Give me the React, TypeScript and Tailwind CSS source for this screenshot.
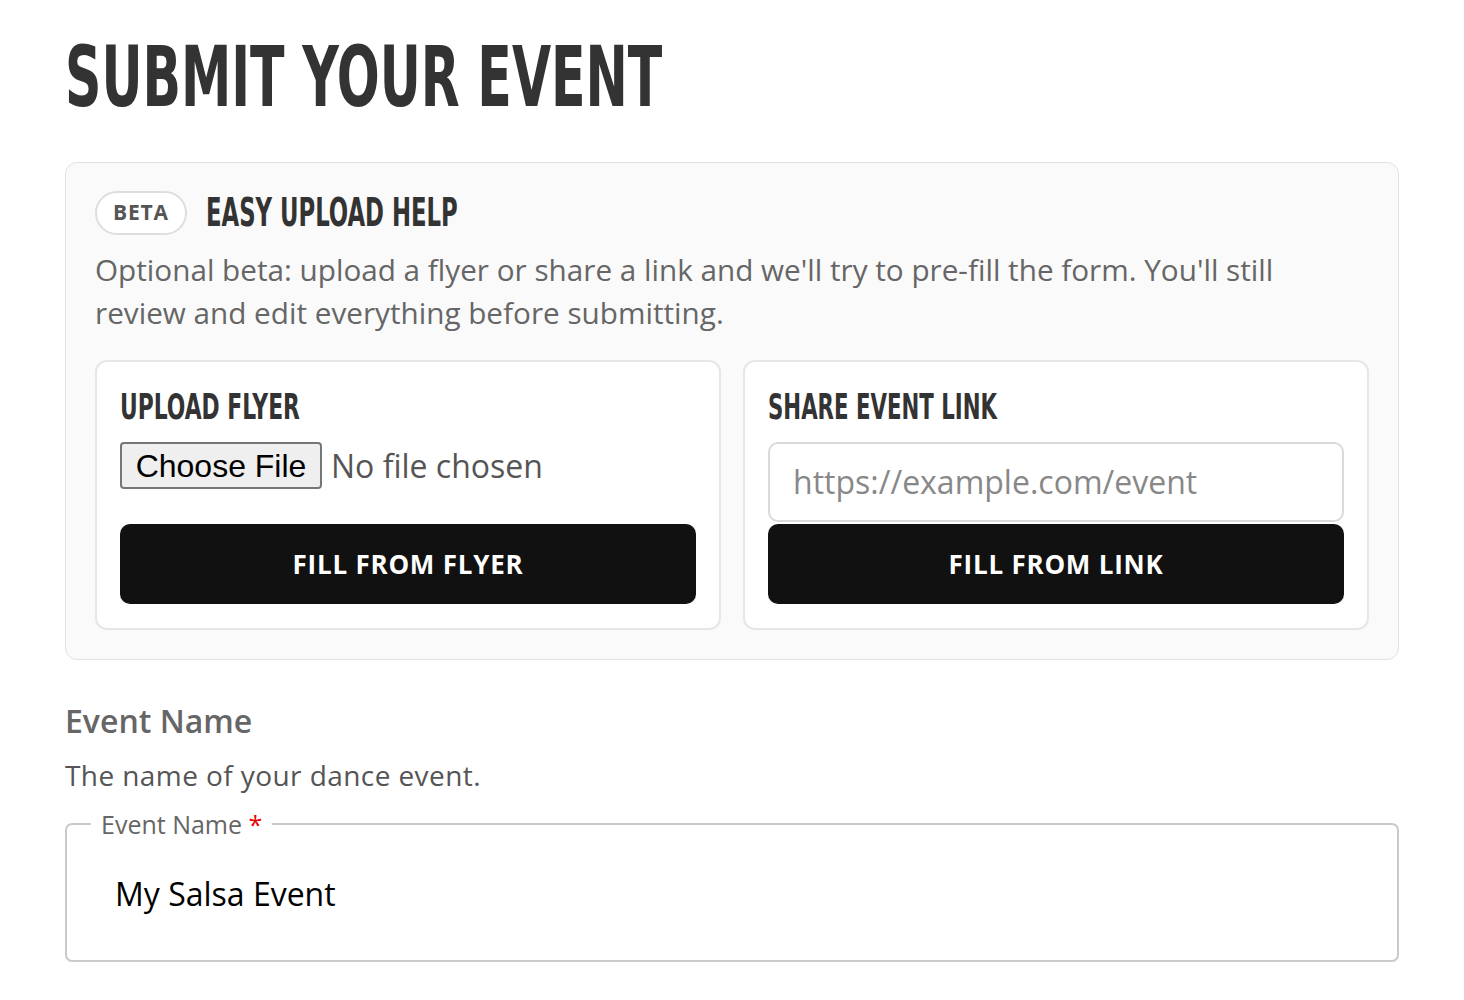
import React from "react";

export default function App() {
  return (
    <div className="min-h-screen bg-white text-[#333] font-['Open_Sans',sans-serif]">
      <div className="pl-[65px] pr-[65px] pt-[35px]">
        <h1 className="text-[84px] leading-[84px] font-bold text-[#333] origin-left scale-x-[0.669] whitespace-nowrap font-['Liberation_Sans_Narrow','DejaVu_Sans_Condensed',sans-serif]">
          SUBMIT YOUR EVENT
        </h1>

        <div className="mt-[43px] rounded-[12px] border border-[#e2e2e2] bg-[#fafafa] px-[29px] pt-[28px] pb-[29px]">
          <div className="flex items-center h-[44px]">
            <span className="flex h-[44px] w-[92px] items-center justify-center rounded-full border-2 border-[#dedede] bg-white text-[21px] font-bold tracking-[0.04em] text-[#555]">
              BETA
            </span>
            <h2 className="ml-[19px] text-[39px] leading-[44px] font-bold text-[#333] origin-left scale-x-[0.649] whitespace-nowrap font-['Liberation_Sans_Narrow','DejaVu_Sans_Condensed',sans-serif]">
              EASY UPLOAD HELP
            </h2>
          </div>
          <p className="mt-[13px] pr-[12px] text-[29.7px] leading-[43px] text-[#666]">
            Optional beta: upload a flyer or share a link and we'll try to pre-fill the form. You'll still review and edit everything before submitting.
          </p>

          <div className="mt-[26px] grid grid-cols-2 gap-[22px]">
            <div className="rounded-[12px] border-2 border-[#e6e6e6] bg-white px-[23px] pt-[23px] pb-[24px]">
              <h3 className="text-[36px] leading-[43px] font-bold text-[#333] origin-left scale-x-[0.674] whitespace-nowrap font-['Liberation_Sans_Narrow','DejaVu_Sans_Condensed',sans-serif]">
                UPLOAD FLYER
              </h3>
              <div className="mt-[14px] flex items-center h-[47px]">
                <span className="flex h-[47px] w-[202px] items-center justify-center rounded-[4px] border-2 border-[#767676] bg-[#efefef] text-[32px] text-black font-['Liberation_Sans',sans-serif]">
                  Choose File
                </span>
                <span className="ml-[9px] text-[32px] text-[#555]">No file chosen</span>
              </div>
              <button className="mt-[35px] flex h-[80px] w-full items-center justify-center rounded-[10px] bg-[#111] text-[26px] font-bold tracking-[0.03em] text-white">
                FILL FROM FLYER
              </button>
            </div>

            <div className="rounded-[12px] border-2 border-[#e6e6e6] bg-white px-[23px] pt-[23px] pb-[24px]">
              <h3 className="text-[36px] leading-[43px] font-bold text-[#333] origin-left scale-x-[0.657] whitespace-nowrap font-['Liberation_Sans_Narrow','DejaVu_Sans_Condensed',sans-serif]">
                SHARE EVENT LINK
              </h3>
              <div className="mt-[14px] flex h-[80px] items-center rounded-[10px] border-2 border-[#dadada] px-[23px]">
                <span className="text-[32px] text-[#888]">https://example.com/event</span>
              </div>
              <button className="mt-[2px] flex h-[80px] w-full items-center justify-center rounded-[10px] bg-[#111] text-[26px] font-bold tracking-[0.03em] text-white">
                FILL FROM LINK
              </button>
            </div>
          </div>
        </div>

        <div className="mt-[39px] text-[32px] leading-[44px] font-semibold text-[#666]">Event Name</div>
        <div className="mt-[10px] text-[28px] leading-[44px] text-[#555] tracking-[0.015em]">The name of your dance event.</div>

        <fieldset className="mt-[12px] h-[153px] rounded-[7px] border-2 border-[#cacaca] px-[24px]">
          <legend className="px-[10px] text-[25px] leading-[30px] text-[#666]">
            Event Name <span className="text-[#e00]">*</span>
          </legend>
          <div className="pl-[24px] pt-[31px] text-[32px] text-black">My Salsa Event</div>
        </fieldset>
      </div>
    </div>
  );
}
